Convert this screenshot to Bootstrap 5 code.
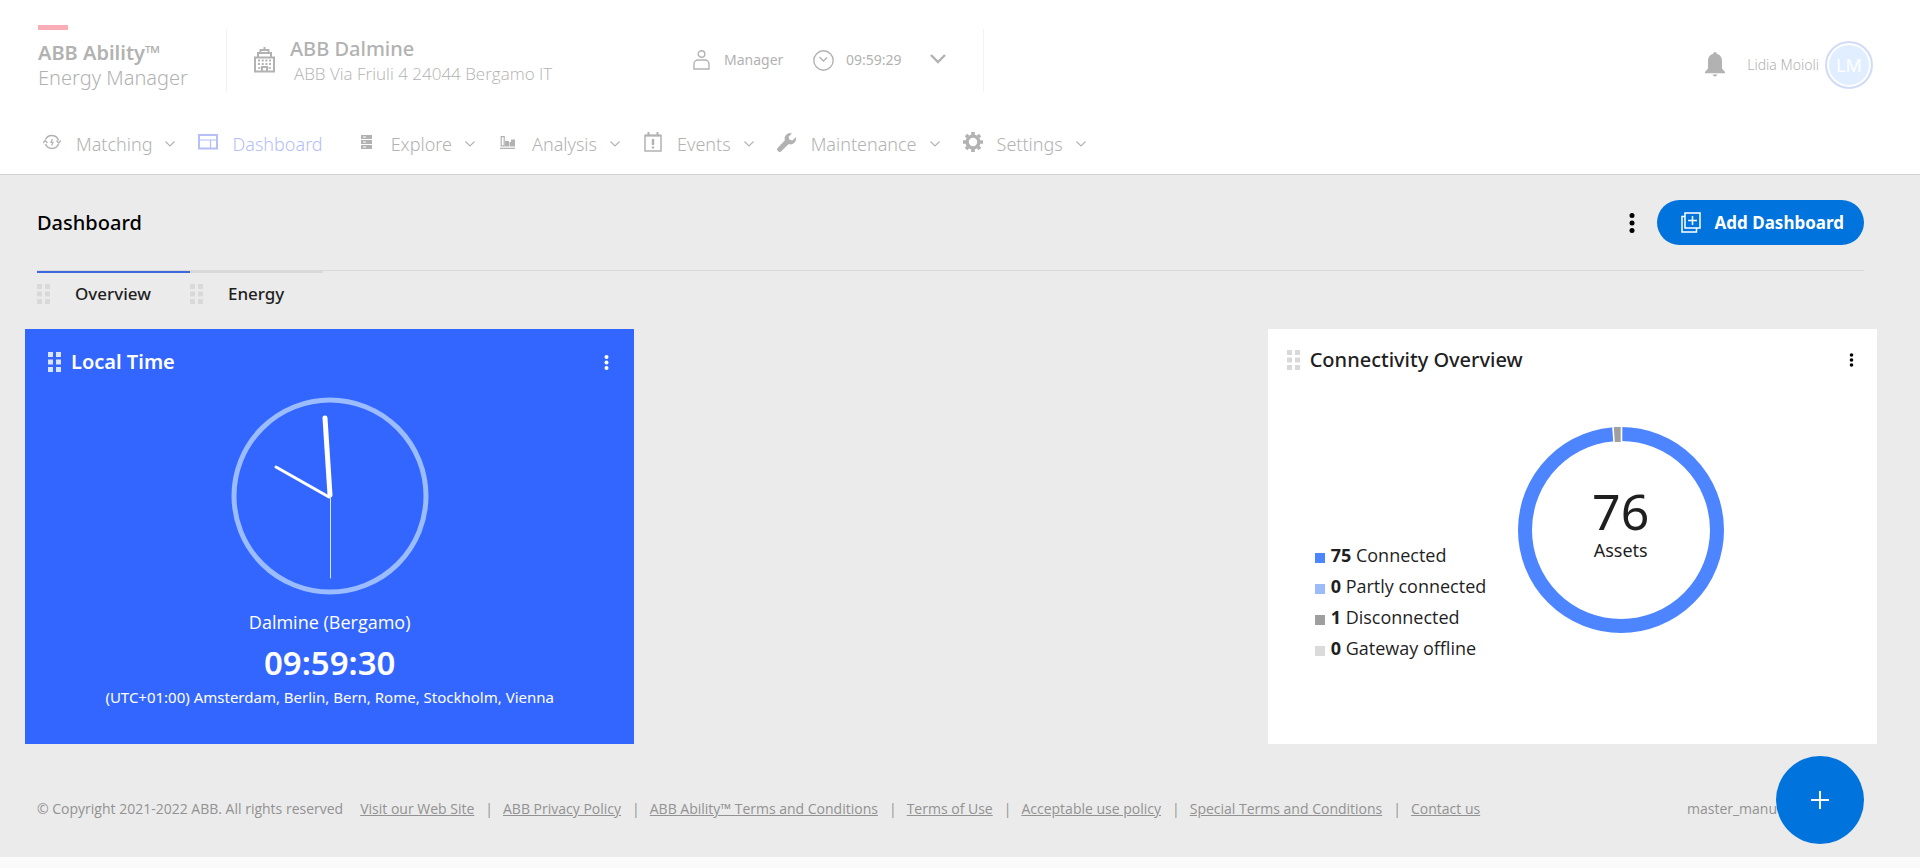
<!DOCTYPE html>
<html lang="en">
<head>
<meta charset="utf-8">
<meta name="viewport" content="width=device-width, initial-scale=1">
<title>ABB Ability Energy Manager - Dashboard</title>
<link rel="stylesheet" href="https://cdn.jsdelivr.net/npm/bootstrap@5.3.0/dist/css/bootstrap.min.css">
<style>
  body { font-family: "Noto Sans", "Open Sans", sans-serif; background: #fafafa; color: #1f1f1f; }
  .text-open { font-family: "Open Sans", "Noto Sans", sans-serif; }
  svg { display: block; flex: none; }
  a { color: inherit; }
  .page-pad { padding-left: 37px; padding-right: 56px; }
  .fs-14 { font-size: 14px; line-height: 20px; }
  .fs-15 { font-size: 15px; line-height: 22px; }
  .fs-17 { font-size: 17px; line-height: 26px; }
  .fs-18 { font-size: 18px; line-height: 26px; }
  .fs-20 { font-size: 20px; line-height: 25px; }
  .fw-medium5 { font-weight: 500; }

  .app-header { background: #fff; border-bottom: 1px solid #d2d2d2; color: #b2b2b2; padding-bottom: 17px; }
  .top-bar { padding-top: 25px; height: 95px; }
  .brand { min-width: 189px; padding-left: 1px; }
  .brand-mark { width: 30px; height: 5px; background: #fbadb7; margin-bottom: 10px; }
  .rule-v { width: 1px; height: 63px; background: #f2f2f2; }
  .rule-end { margin-left: 37px; }
  .site { gap: 15px; margin-left: 27px; flex: 0 0 439px; }
  .site-name { padding-top: 2px; }
  .who { gap: 14px; width: 120px; }
  .when { gap: 12px; width: 117px; }
  .user { margin-top: 10px; gap: 6px; margin-right: -9px; }
  .avatar { width: 48px; height: 48px; border-radius: 50%; border: 2px solid #d3dcf7; background: #e0eeff; box-shadow: inset 0 0 0 2px #fff; color: #fff; }
  .main-nav { margin-top: 36px; padding-left: 2px; gap: 20px; }
  .main-nav .nav-link { display: flex; align-items: center; padding: 0; color: inherit; font-weight: 300; }
  .main-nav .nav-link.active { color: #b4c0f7; margin-right: 11px; }
  .nav-ico { width: 26px; height: 26px; display: flex; align-items: center; justify-content: center; margin-right: 11px; padding-bottom: 4px; }
  .nav-chev { margin-left: 13px; }

  main { background: #ebebeb; padding-top: 25px; }
  .bare { background: none; border: 0; padding: 0; color: inherit; }
  .btn-add { --bs-btn-bg: #0073dc; --bs-btn-color: #fff; --bs-btn-hover-bg: #0066c4; --bs-btn-hover-color: #fff; height: 45px; padding: 0 20px 0 24px; border: 0; font-size: 17px; font-weight: 700; gap: 14px; }
  .kebab-lg { width: 24px; margin-right: 13px; }
  .dash-tabs { border-top: 1px solid #d9d9d9; margin-top: 25px; }
  .dash-tabs .nav-link { border-top: 2px solid #d9d9d9; padding: 8px 39px 0 0; gap: 25px; color: #1f1f1f; font-weight: 500; display: flex; align-items: center; border-radius: 0; }
  .dash-tabs .nav-link.active { border-top-color: #3f66dc; }
  .board { padding: 22px 43px 0 25px; }
  .board .row { --bs-gutter-x: 12px; }
  .widget { min-height: 415px; }
  .widget h2 { line-height: 28px; }
  .widget-blue { background: #3366ff; color: #fff; }
  .widget-blue header { padding: 19px 25px 0 23px; gap: 10px; }
  .widget-white header { padding: 17px 23px 0 19px; gap: 10px; }
  .clock-face { margin: 21px 0 14px; }
  .clock-time { font-size: 33px; line-height: 40px; font-weight: 600; margin: 8px 0 3px; }
  .donut-row { padding: 53px 0 0 47px; }
  .legend-list { margin-top: 113px; width: 203px; line-height: 31px; font-size: 18px; white-space: nowrap; }
  .swatch { display: inline-block; width: 10px; height: 10px; margin-right: 6px; vertical-align: -1px; }
  .donut-text { position: absolute; inset: 0; padding-bottom: 12px; }
  .big-num { font-size: 50px; line-height: 52px; }

  .app-footer { padding-top: 55px; padding-bottom: 38px; color: #929292; }
  .links-bar { margin-left: 17px; }
  .links-bar li + li::before { content: "|"; margin: 0 10px 0 11px; }
  .build { width: 177px; }
  .fab { position: absolute; right: 56px; bottom: 13px; width: 88px; height: 88px; background: #0073dc; }
</style>
</head>
<body>
<header class="app-header page-pad">
  <div class="top-bar d-flex align-items-center">
    <div class="brand align-self-start fs-20">
      <div class="brand-mark"></div>
      <div class="fw-semibold">ABB Ability™</div>
      <div class="fw-light">Energy Manager</div>
    </div>
    <div class="rule-v"></div>
    <div class="site d-flex align-items-center">
      <svg width="21" height="26" viewBox="0 0 21 26" fill="none" stroke="currentColor" stroke-width="2"><path d="M1 10.500h19v14H1zM4 10V6h13v4M6.500 6V3h8v3M10.500 3V0"/><path d="M8 24v-4h5v4"/><path d="M4 13.500h13M4 17h13" stroke-dasharray="2 1.700"/><path d="M4 21h2.500M14.500 21H17" stroke-width="1.500"/></svg>
      <div class="site-name">
        <div class="fs-20 fw-medium5">ABB Dalmine</div>
        <div class="fs-17 text-open fw-light ps-1">ABB Via Friuli 4 24044 Bergamo IT</div>
      </div>
    </div>
    <div class="who d-flex align-items-center fs-14">
      <svg width="17" height="20" viewBox="0 0 17 20" fill="none" stroke="currentColor" stroke-width="1.400"><circle cx="8.500" cy="4" r="3.300"/><path d="M1 19v-5a4 4 0 0 1 4-4h7a4 4 0 0 1 4 4v5z"/></svg>
      <span>Manager</span>
    </div>
    <div class="when d-flex align-items-center fs-14">
      <svg width="21" height="21" viewBox="0 0 21 21" fill="none" stroke="currentColor" stroke-width="1.400"><circle cx="10.500" cy="10.500" r="9.700"/><path d="M6.500 7l4 4 3.500-3.500"/></svg>
      <span>09:59:29</span>
    </div>
    <button class="bare" type="button" aria-label="Show sites"><svg width="16" height="16" viewBox="0 0 16 16" fill="none" stroke="currentColor" stroke-width="2.400"><path d="M1 3l7 7 7-7"/></svg></button>
    <div class="rule-v rule-end"></div>
    <div class="user d-flex align-items-center ms-auto">
      <button class="bare me-3" type="button" aria-label="Notifications"><svg width="20" height="26" viewBox="0 0 20 26" fill="currentColor"><path d="M10 0c1 0 1.700.8 1.700 1.700 3.600.8 5.300 3.800 5.300 7.300v7.500L20 20v1.200H0V20l3-3.500V9c0-3.500 1.700-6.500 5.300-7.300C8.300.8 9 0 10 0zM7.600 22.600h4.800c-.3 1.100-1.200 1.800-2.400 1.800s-2.100-.7-2.400-1.800z"/></svg></button>
      <span class="fs-14 fw-light">Lidia Moioli</span>
      <div class="avatar d-flex align-items-center justify-content-center fs-18">LM</div>
    </div>
  </div>
  <nav aria-label="Main">
    <ul class="nav main-nav fs-18">
      <li><a class="nav-link" href="#"><span class="nav-ico"><svg width="18" height="18" viewBox="0 0 18 18" fill="none" stroke="currentColor" stroke-width="1.500"><path d="M2.500 6.500A7 7 0 0 1 15.500 7.500M15.500 11A7 7 0 0 1 2.500 11"/><path d="M0 10l2.200-2.500L4.500 10M13.500 7.500l2.200 2.500L18 7.500" stroke-width="1.200"/><path d="M9.300 6L8 9.300h2L8.700 12.500" stroke-width="1.200"/></svg></span>Matching<svg class="nav-chev" width="10" height="6" viewBox="0 0 10 6" fill="none" stroke="currentColor" stroke-width="1.100"><path d="M.5.500L5 5 9.500.500"/></svg></a></li>
      <li><a class="nav-link active" aria-current="page" href="#"><span class="nav-ico"><svg width="20" height="16" viewBox="0 0 20 16" fill="none" stroke="currentColor" stroke-width="2"><path d="M1 1h18v13.500H1z"/><path d="M2 6h16M12.500 6v8" stroke-width="1.200"/></svg></span>Dashboard</a></li>
      <li><a class="nav-link" href="#"><span class="nav-ico"><svg width="11" height="14" viewBox="0 0 11 14"><path d="M0 0h11v4H0zM0 5h11v4H0zM0 10h11v4H0z" fill="currentColor"/><path d="M2 2h3M2 7h3M2 12h3" stroke="#fff"/></svg></span>Explore<svg class="nav-chev" width="10" height="6" viewBox="0 0 10 6" fill="none" stroke="currentColor" stroke-width="1.100"><path d="M.5.500L5 5 9.500.500"/></svg></a></li>
      <li><a class="nav-link" href="#"><span class="nav-ico"><svg width="15" height="13" viewBox="0 0 15 13" fill="currentColor"><path d="M0 11.700h15V13H0zM5 5h4v5.500H5zM9.500 6H11V3.500h4v7H9.500z"/><path d="M1.200.6h3v9.300h-3z" fill="none" stroke="currentColor" stroke-width="1.200"/></svg></span>Analysis<svg class="nav-chev" width="10" height="6" viewBox="0 0 10 6" fill="none" stroke="currentColor" stroke-width="1.100"><path d="M.5.500L5 5 9.500.500"/></svg></a></li>
      <li><a class="nav-link" href="#"><span class="nav-ico"><svg width="18" height="20" viewBox="0 0 18 20" fill="none" stroke="currentColor" stroke-width="1.500"><path d="M1 3.500h16V19H1z"/><path d="M1 3.500h16M4.500 0v4M13.500 0v4" stroke-width="2"/><path d="M9 7v6M9 14.500v2" stroke-width="2.400"/></svg></span>Events<svg class="nav-chev" width="10" height="6" viewBox="0 0 10 6" fill="none" stroke="currentColor" stroke-width="1.100"><path d="M.5.500L5 5 9.500.500"/></svg></a></li>
      <li><a class="nav-link" href="#"><span class="nav-ico"><svg width="19" height="19" viewBox="0 0 19 19" fill="currentColor"><path d="M14.800.4a5.400 5.400 0 0 0-6.900 6.800L.6 15a1.700 1.700 0 0 0 0 2.500l.9.900c.7.700 1.800.7 2.500 0l7.800-7.300a5.400 5.400 0 0 0 6.800-6.900l-3.200 3.300-2.900-.8-.8-2.900z"/></svg></span>Maintenance<svg class="nav-chev" width="10" height="6" viewBox="0 0 10 6" fill="none" stroke="currentColor" stroke-width="1.100"><path d="M.5.500L5 5 9.500.500"/></svg></a></li>
      <li><a class="nav-link" href="#"><span class="nav-ico"><svg width="20" height="20" viewBox="0 0 20 20" fill="none" stroke="currentColor"><circle cx="10" cy="10" r="5.900" stroke-width="3.400"/><path d="M10 0v3M10 17v3M0 10h3M17 10h3M3 3l2 2M15 15l2 2M17 3l-2 2M5 15l-2 2" stroke-width="3.600"/></svg></span>Settings<svg class="nav-chev" width="10" height="6" viewBox="0 0 10 6" fill="none" stroke="currentColor" stroke-width="1.100"><path d="M.5.500L5 5 9.500.500"/></svg></a></li>
    </ul>
  </nav>
</header>

<main>
  <div class="page-pad">
    <div class="d-flex align-items-center">
      <h1 class="fs-20 fw-medium5 mb-0 me-auto text-black">Dashboard</h1>
      <button class="bare kebab-lg d-flex justify-content-center text-black" type="button" aria-label="More"><svg width="6" height="20" viewBox="0 0 6 20" fill="currentColor"><circle cx="3" cy="2.500" r="2.500"/><circle cx="3" cy="10" r="2.500"/><circle cx="3" cy="17.500" r="2.500"/></svg></button>
      <button class="btn btn-add rounded-pill d-flex align-items-center" type="button">
        <svg width="20" height="21" viewBox="0 0 20 21" fill="none" stroke="currentColor" stroke-width="1.500"><path d="M4 1h15v15H4z"/><path d="M4 4.500H1V20h14.500v-4M11.500 4v9M7 8.500h9"/></svg>
        Add Dashboard
      </button>
    </div>
    <ul class="nav dash-tabs fs-17">
      <li><a class="nav-link active" href="#"><svg width="13" height="20" viewBox="0 0 13 20" fill="#d9d9d9"><path d="M0 0h5v5H0zM8 0h5v5H8zM0 7.500h5v5H0zM8 7.500h5v5H8zM0 15h5v5H0zM8 15h5v5H8z"/></svg>Overview</a></li>
      <li><a class="nav-link" href="#"><svg width="13" height="20" viewBox="0 0 13 20" fill="#d9d9d9"><path d="M0 0h5v5H0zM8 0h5v5H8zM0 7.500h5v5H0zM8 7.500h5v5H8zM0 15h5v5H0zM8 15h5v5H8z"/></svg>Energy</a></li>
    </ul>
  </div>

  <div class="board">
    <div class="row justify-content-between">
      <div class="col-4">
        <section class="widget widget-blue">
          <header class="d-flex align-items-center">
            <svg width="13" height="20" viewBox="0 0 13 20" fill="#dbe4ff"><path d="M0 0h5v5H0zM8 0h5v5H8zM0 7.500h5v5H0zM8 7.500h5v5H8zM0 15h5v5H0zM8 15h5v5H8z"/></svg>
            <h2 class="fs-20 fw-semibold mb-0 me-auto">Local Time</h2>
            <button class="bare" type="button" aria-label="Widget menu"><svg width="5" height="15" viewBox="0 0 5 15" fill="currentColor"><circle cx="2.500" cy="2" r="2"/><circle cx="2.500" cy="7.500" r="2"/><circle cx="2.500" cy="13" r="2"/></svg></button>
          </header>
          <div class="d-flex flex-column align-items-center text-center">
            <svg class="clock-face" width="198" height="198" viewBox="0 0 198 198" fill="none" stroke-linecap="round"><circle cx="99" cy="99" r="96" stroke="#9bbcff" stroke-width="5"/><path d="M98 100L45 70" stroke="#fff" stroke-width="3"/><path d="M99 98L94 21" stroke="#fff" stroke-width="5"/><path d="M99.500 99v82" stroke="#dbe6ff"/></svg>
            <div class="fs-18 text-open">Dalmine (Bergamo)</div>
            <div class="clock-time">09:59:30</div>
            <div class="fs-15">(UTC+01:00) Amsterdam, Berlin, Bern, Rome, Stockholm, Vienna</div>
          </div>
        </section>
      </div>
      <div class="col-4">
        <section class="widget widget-white bg-white">
          <header class="d-flex align-items-center">
            <svg width="13" height="20" viewBox="0 0 13 20" fill="#d9d9d9"><path d="M0 0h5v5H0zM8 0h5v5H8zM0 7.500h5v5H0zM8 7.500h5v5H8zM0 15h5v5H0zM8 15h5v5H8z"/></svg>
            <h2 class="fs-20 fw-medium5 mb-0 me-auto">Connectivity Overview</h2>
            <button class="bare text-black" type="button" aria-label="Widget menu"><svg width="5" height="14" viewBox="0 0 5 14" fill="currentColor"><circle cx="2.500" cy="2" r="1.800"/><circle cx="2.500" cy="7" r="1.800"/><circle cx="2.500" cy="12" r="1.800"/></svg></button>
          </header>
          <div class="donut-row d-flex align-items-start">
            <ul class="legend-list text-open list-unstyled mb-0">
              <li><span class="swatch" style="background:#4c85ff"></span><b>75</b> Connected</li>
              <li><span class="swatch" style="background:#9bbcf8"></span><b>0</b> Partly connected</li>
              <li><span class="swatch" style="background:#9f9f9f"></span><b>1</b> Disconnected</li>
              <li><span class="swatch" style="background:#dbdbdb"></span><b>0</b> Gateway offline</li>
            </ul>
            <div class="position-relative">
              <svg width="206" height="206" viewBox="0 0 206 206" fill="none"><circle cx="103" cy="103" r="96" stroke="#4c85ff" stroke-width="14"/><path d="M103 0v15H96L94.500.300z" fill="#9f9f9f"/><path d="M103.500 0v15M95 0l1 15" stroke="#fff" stroke-width="1.600"/></svg>
              <div class="donut-text d-flex flex-column align-items-center justify-content-center">
                <span class="big-num">76</span>
                <span class="fs-18">Assets</span>
              </div>
            </div>
          </div>
        </section>
      </div>
    </div>
  </div>

  <footer class="app-footer text-open page-pad position-relative d-flex fs-14">
    <span>© Copyright 2021-2022 ABB. All rights reserved</span>
    <ul class="links-bar list-unstyled d-flex mb-0 me-auto">
      <li><a href="#">Visit our Web Site</a></li>
      <li><a href="#">ABB Privacy Policy</a></li>
      <li><a href="#">ABB Ability™ Terms and Conditions</a></li>
      <li><a href="#">Terms of Use</a></li>
      <li><a href="#">Acceptable use policy</a></li>
      <li><a href="#">Special Terms and Conditions</a></li>
      <li><a href="#">Contact us</a></li>
    </ul>
    <span class="build">master_manu</span>
    <button class="fab btn p-0 rounded-circle d-flex align-items-center justify-content-center text-white" type="button" aria-label="Add widget"><svg width="18" height="18" viewBox="0 0 18 18" stroke="currentColor" stroke-width="2"><path d="M9 0v18M0 9h18"/></svg></button>
  </footer>
</main>
<script src="https://cdn.jsdelivr.net/npm/bootstrap@5.3.0/dist/js/bootstrap.bundle.min.js"></script>
</body>
</html>
